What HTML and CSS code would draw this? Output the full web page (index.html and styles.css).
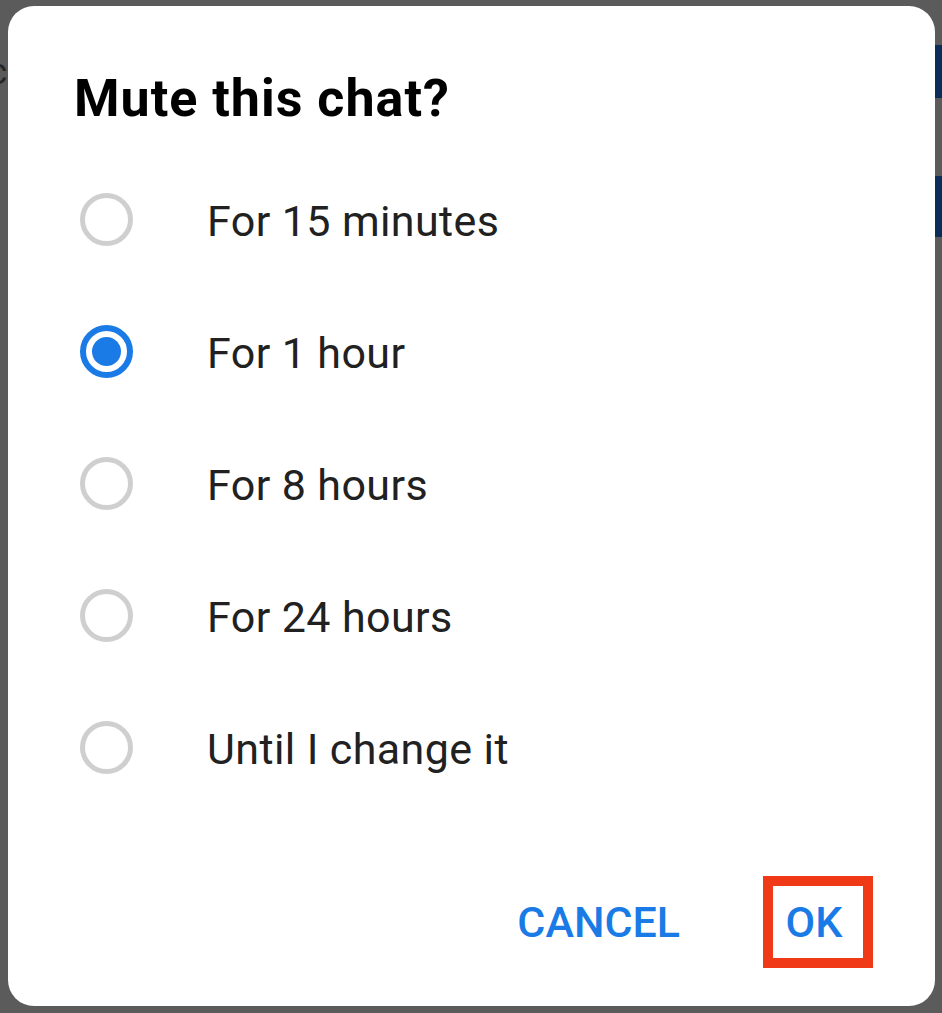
FILE: index.html
```html
<!DOCTYPE HTML>
<html lang="en">
<head>
    <meta charset="UTF-8">
    <title>Mute this chat?</title>
    <link rel="stylesheet" href="styles.css">
</head>
<body>
    <div class="backdrop">
        <div class="bg-row bg-row-first">
            <span class="bg-label">Rc</span>
            <span class="bg-btn"></span>
        </div>
        <div class="bg-row">
            <span class="bg-label">e:</span>
            <span class="bg-btn"></span>
        </div>
    </div>

    <div class="dialog">
        <h2 class="dialog-title">Mute this chat?</h2>
        <ul class="options">
            <li class="option"><span class="radio"></span><span class="option-text">For 15 minutes</span></li>
            <li class="option"><span class="radio radio-on"></span><span class="option-text">For 1 hour</span></li>
            <li class="option"><span class="radio"></span><span class="option-text">For 8 hours</span></li>
            <li class="option"><span class="radio"></span><span class="option-text">For 24 hours</span></li>
            <li class="option"><span class="radio"></span><span class="option-text">Until I change it</span></li>
        </ul>
        <div class="actions">
            <a class="btn" href="javascript:;">CANCEL</a>
            <a class="btn btn-ok" href="javascript:;">OK</a>
        </div>
    </div>
</body>
</html>
```

FILE: styles.css
```css
html,
body {
    margin: 0;
    padding: 0;
    height: 100%;
}
body {
    background: #5b5b5b;
    font-family: Roboto, "Liberation Sans", sans-serif;
    position: relative;
    overflow: hidden;
}

/* dimmed page behind the dialog */
.backdrop {
    padding-top: 45px;
}
.bg-row {
    display: flex;
    justify-content: space-between;
    align-items: center;
    height: 53px;
    margin-bottom: 78px;
}
.bg-row + .bg-row {
    height: 61px;
}
.bg-label {
    margin-left: -34px;
    font-size: 36px;
    color: #262626;
}
.bg-btn {
    width: 40px;
    height: 100%;
    background: #0b2d57;
}

.dialog {
    position: absolute;
    left: 8px;
    top: 6px;
    width: 927px;
    height: 1000px;
    box-sizing: border-box;
    background: #fff;
    border-radius: 26px;
    padding: 67px 62px 38px 0;
    display: flex;
    flex-direction: column;
}
.dialog-title {
    margin: 0 0 0 66px;
    font-size: 52px;
    line-height: 52px;
    font-weight: 700;
    letter-spacing: 1px;
    color: #000;
}
.options {
    list-style-type: none;
    margin: 28px 0 0 0;
    padding: 0 0 0 72px;
}
.option {
    display: flex;
    align-items: center;
    height: 132px;
}
.radio {
    width: 53px;
    height: 53px;
    box-sizing: border-box;
    border: 5px solid #cfcfcf;
    border-radius: 50%;
    flex-shrink: 0;
    position: relative;
}
.radio-on {
    border: 6px solid #1b7be6;
}
.radio-on::after {
    content: "";
    position: absolute;
    left: 6px;
    top: 6px;
    width: 29px;
    height: 29px;
    border-radius: 50%;
    background: #1b7be6;
}
.option-text {
    margin-left: 74px;
    margin-top: 4px;
    font-size: 43px;
    line-height: 43px;
    letter-spacing: 0.4px;
    color: #212121;
}
.actions {
    margin-top: auto;
    display: flex;
    justify-content: flex-end;
    align-items: center;
    gap: 83px;
}
.btn {
    display: block;
    font-size: 43px;
    line-height: 72px;
    font-weight: 500;
    color: #1b7be6;
    text-decoration: none;
}
.btn-ok {
    width: 82px;
    height: 72px;
    padding-right: 8px;
    text-align: center;
    border: 10px solid #f03a17;
}
```
